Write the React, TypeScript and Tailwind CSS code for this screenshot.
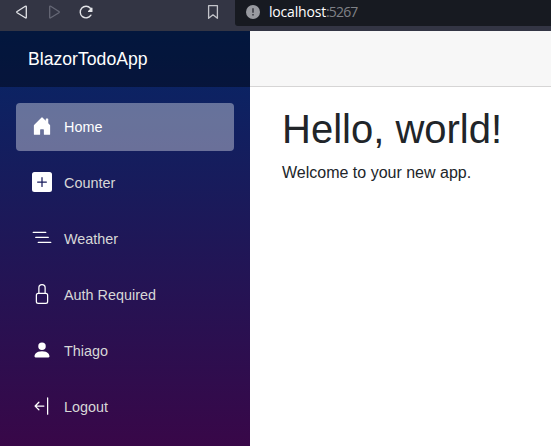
const navItems = [
  {
    label: 'Home',
    active: true,
    path: 'M6.5 14.5v-3.505c0-.245.25-.495.5-.495h2c.25 0 .5.25.5.5v3.5a.5.5 0 0 0 .5.5h4a.5.5 0 0 0 .5-.5v-7a.5.5 0 0 0-.146-.354L13 5.793V2.5a.5.5 0 0 0-.5-.5h-1a.5.5 0 0 0-.5.5v1.293L8.354 1.146a.5.5 0 0 0-.708 0l-6 6A.5.5 0 0 0 1.5 7.5v7a.5.5 0 0 0 .5.5h4a.5.5 0 0 0 .5-.5Z',
  },
  {
    label: 'Counter',
    path: 'M2 0a2 2 0 0 0-2 2v12a2 2 0 0 0 2 2h12a2 2 0 0 0 2-2V2a2 2 0 0 0-2-2H2zm6.5 4.5v3h3a.5.5 0 0 1 0 1h-3v3a.5.5 0 0 1-1 0v-3h-3a.5.5 0 0 1 0-1h3v-3a.5.5 0 0 1 1 0z',
  },
  {
    label: 'Weather',
    path: 'M4.5 11.5A.5.5 0 0 1 5 11h10a.5.5 0 0 1 0 1H5a.5.5 0 0 1-.5-.5zm-2-4A.5.5 0 0 1 3 7h10a.5.5 0 0 1 0 1H3a.5.5 0 0 1-.5-.5zm-2-4A.5.5 0 0 1 1 3h10a.5.5 0 0 1 0 1H1a.5.5 0 0 1-.5-.5z',
  },
  {
    label: 'Auth Required',
    path: 'M8 1a2 2 0 0 1 2 2v4H6V3a2 2 0 0 1 2-2zm3 6V3a3 3 0 0 0-6 0v4a2 2 0 0 0-2 2v5a2 2 0 0 0 2 2h6a2 2 0 0 0 2-2V9a2 2 0 0 0-2-2zM5 8h6a1 1 0 0 1 1 1v5a1 1 0 0 1-1 1H5a1 1 0 0 1-1-1V9a1 1 0 0 1 1-1z',
  },
  {
    label: 'Thiago',
    path: 'M3 14s-1 0-1-1 1-4 6-4 6 3 6 4-1 1-1 1H3Zm5-6a3 3 0 1 0 0-6 3 3 0 0 0 0 6Z',
  },
  {
    label: 'Logout',
    path: 'M12.5 15a.5.5 0 0 1-.5-.5v-13a.5.5 0 0 1 1 0v13a.5.5 0 0 1-.5.5ZM10 8a.5.5 0 0 1-.5.5H3.707l2.147 2.146a.5.5 0 0 1-.708.708l-3-3a.5.5 0 0 1 0-.708l3-3a.5.5 0 1 1 .708.708L3.707 7.5H9.5a.5.5 0 0 1 .5.5Z',
  },
];

function BrowserBar() {
  return (
    <header className="flex h-[31px] shrink-0 bg-[#333544]">
      <div className="flex w-[235px] shrink-0 items-start pt-1 pl-3.5 text-[#e3e4e8]">
        <svg className="h-4 w-4" viewBox="0 0 16 16" fill="none" stroke="currentColor" strokeWidth="1.3" strokeLinejoin="round">
          <path d="M12.3 2.6v10.8q0 1-1 .4L3.1 8.7q-.8-.6 0-1.2l8.2-5.2q1-.6 1 .3Z" />
        </svg>
        <svg className="ml-4 h-4 w-4 text-[#666876]" viewBox="0 0 16 16" fill="none" stroke="currentColor" strokeWidth="1.3" strokeLinejoin="round">
          <path d="M3.7 2.6v10.8q0 1 1 .4l8.2-5.1q.8-.6 0-1.2L4.7 2.3q-1-.6-1 .3Z" />
        </svg>
        <svg className="ml-4 h-4 w-4" viewBox="0 0 16 16" fill="none" stroke="currentColor" strokeWidth="1.4" strokeLinecap="round">
          <path d="M12.4 4.2A5.8 5.8 0 1 0 12.9 11.2" />
          <path d="M13.8 4.2v3.2h-3.2Z" fill="currentColor" strokeLinejoin="round" />
        </svg>
        <svg className="mr-3.5 ml-auto h-4 w-4 text-[#c3c4ca]" viewBox="0 0 16 16" fill="none" stroke="currentColor" strokeWidth="1.3" strokeLinejoin="round">
          <path d="M3.6 1.7h8.8v12.6L8 10.8l-4.4 3.5Z" />
        </svg>
      </div>
      <div className="flex h-[26px] flex-1 items-center rounded-bl-[3px] bg-[#171a21] pl-[11px]">
        <svg className="mb-0.5 h-3.5 w-3.5" viewBox="0 0 14 14">
          <circle cx="7" cy="7" r="7" fill="#989aa0" />
          <path d="M6.2 3.3h1.6v4.5H6.2zM6.2 9h1.6v1.6H6.2z" fill="#3b3d45" />
        </svg>
        <span className="mb-0.5 ml-[9px] font-['Open_Sans','Noto_Sans',sans-serif] text-[14px] leading-5 tracking-[-0.18px] text-white">
          localhost<span className="tracking-[-0.85px] text-[#7f8187]">:5267</span>
        </span>
      </div>
    </header>
  );
}

function Sidebar() {
  return (
    <aside className="w-[250px] shrink-0 bg-[linear-gradient(180deg,rgb(5,39,103)_0px,#3a0647_430px)]">
      <div className="flex h-14 items-center bg-black/40 pl-7 text-[17.6px] tracking-[0.02px] text-white">
        BlazorTodoApp
      </div>
      <nav className="flex flex-col gap-2 px-4 pt-4">
        {navItems.map((item) => (
          <a
            key={item.label}
            className={`flex h-12 items-center rounded px-4 text-[14.4px] ${item.active ? 'bg-white/37 text-white' : 'text-[#d7d7d7]'}`}
          >
            <svg className="mr-3 mb-0.5 h-5 w-5 text-white" viewBox="0 0 16 16" fill="currentColor">
              <path d={item.path} />
            </svg>
            <span className="pt-0.5">{item.label}</span>
          </a>
        ))}
      </nav>
    </aside>
  );
}

export default function App() {
  return (
    <div className="flex h-screen flex-col overflow-hidden bg-white font-['Liberation_Sans',Arial,sans-serif]">
      <BrowserBar />
      <div className="flex min-h-0 flex-1">
        <Sidebar />
        <main className="flex-1">
          <div className="h-14 border-b border-[#d6d5d5] bg-[#f7f7f7]" />
          <article className="px-8 pt-[17.6px] text-[#212529]">
            <h1 className="text-[40px] leading-12">Hello, world!</h1>
            <p className="mt-2 text-base">Welcome to your new app.</p>
          </article>
        </main>
      </div>
    </div>
  );
}
